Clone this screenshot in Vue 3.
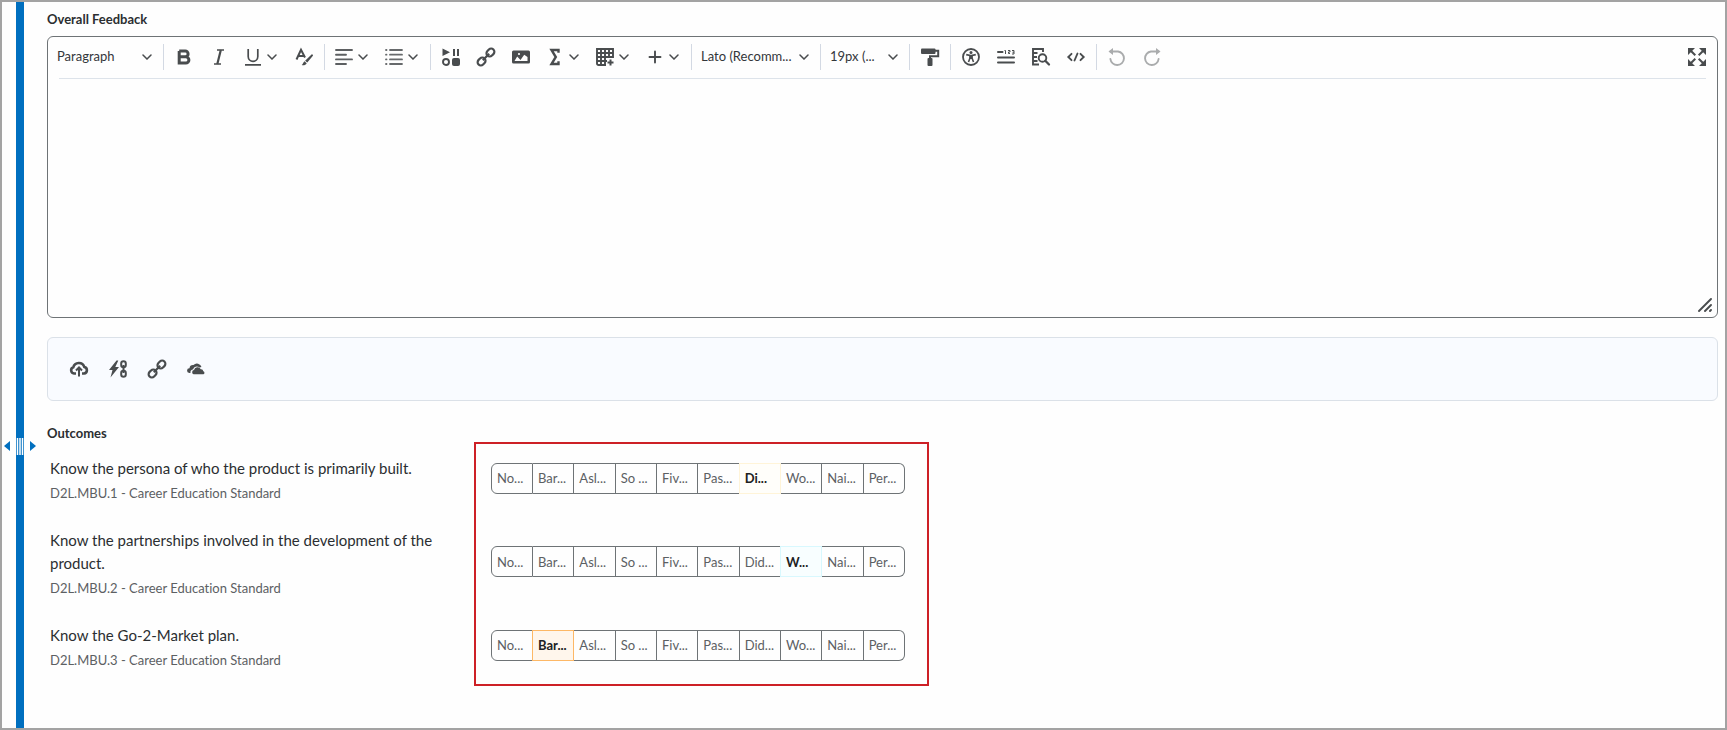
<script setup>
import { ref } from 'vue'

const feedback = ref('')
const levels = ['No...', 'Bar...', 'Asl...', 'So ...', 'Fiv...', 'Pas...', 'Did...', 'Wo...', 'Nai...', 'Per...']
const outcomes = ref([
  { id: 1, title: 'Know the persona of who the product is primarily built.', code: 'D2L.MBU.1 - Career Education Standard', selected: 6, tone: 'yellow', short: 'Di...' },
  { id: 2, title: 'Know the partnerships involved in the development of the product.', code: 'D2L.MBU.2 - Career Education Standard', selected: 7, tone: 'cyan', short: 'W...' },
  { id: 3, title: 'Know the Go-2-Market plan.', code: 'D2L.MBU.3 - Career Education Standard', selected: 1, tone: 'orange', short: 'Bar...' }
])
</script>

<template>
  <div class="page">
    <div class="splitter">
      <div class="bar"></div>
      <div class="handle">
        <button type="button" aria-label="Collapse left panel"><svg width="6" height="10" viewBox="0 0 6 10"><path d="M6 0v10L0 5z" fill="#006fbf" /></svg></button>
        <svg width="8" height="17" viewBox="0 0 8 17"><path d="M1.500 0v17M4 0v17M6.500 0v17" stroke="#fff" stroke-width="1.500" /></svg>
        <button type="button" aria-label="Collapse right panel"><svg width="6" height="10" viewBox="0 0 6 10"><path d="M0 0v10l6-5z" fill="#006fbf" /></svg></button>
      </div>
    </div>

    <main class="content">
      <h2 id="feedback-label">Overall Feedback</h2>

      <section class="editor">
        <div class="toolbar" role="toolbar" aria-label="Formatting">
          <span class="pick format">
            <select aria-label="Format"><option>Paragraph</option></select>
            <svg class="chev" viewBox="0 0 10 6"><path d="M1 1l4 4 4-4" /></svg>
          </span>
          <i class="sep"></i>
          <button type="button" aria-label="Bold"><svg class="ic" viewBox="0 0 18 18"><path d="M4.200 3h6a2.900 2.900 0 0 1 0 5.800H4.200M4.200 8.800h6.600a3.100 3.100 0 0 1 0 6.200H4.200V3" fill="none" stroke="#494c4e" stroke-width="3" /></svg></button>
          <button type="button" aria-label="Italic"><svg class="ic" viewBox="0 0 18 18"><path d="M7 2h7M4 16h7" fill="none" stroke="#494c4e" stroke-width="1.300" /><path d="M10.800 2L7.300 16" fill="none" stroke="#494c4e" stroke-width="2.200" /></svg></button>
          <button type="button" class="split" aria-label="Underline"><svg class="ic" viewBox="0 0 18 18"><path d="M4.200 1v7.500a4.800 4.800 0 0 0 9.600 0V1M1 16.800h16" fill="none" stroke="#494c4e" stroke-width="1.700" /></svg><svg class="chev" viewBox="0 0 10 6"><path d="M1 1l4 4 4-4" /></svg></button>
          <button type="button" aria-label="Text color"><svg class="ic" viewBox="0 0 18 18"><path d="M1.500 11.500L6 1.800 10 9.500M3.500 8h5.500" fill="none" stroke="#494c4e" stroke-width="2" /><path d="M16.800 6.200c1.100 0 1.600 1.100.9 1.800l-5.400 6.600-2.200-1.900zM9.500 13.300l2.200 1.900c-1 1.900-3 2.300-5 1.800 1.400-.7 1.300-2.500 2.800-3.700z" fill="#494c4e" /></svg></button>
          <i class="sep"></i>
          <button type="button" class="split" aria-label="Alignment"><svg class="ic" viewBox="0 0 18 18"><path d="M1 2h16M1 6.700h10M1 11.400h16M1 16h10" fill="none" stroke="#5c5f61" stroke-width="1.900" stroke-linecap="round" /></svg><svg class="chev" viewBox="0 0 10 6"><path d="M1 1l4 4 4-4" /></svg></button>
          <button type="button" class="split" aria-label="List"><svg class="ic" viewBox="0 0 18 18"><path d="M5 2h12M5 6.700h12M5 11.400h12M5 16h12M1 2h.5M1 6.700h.5M1 11.400h.5M1 16h.5" fill="none" stroke="#66696b" stroke-width="1.800" stroke-linecap="round" /></svg><svg class="chev" viewBox="0 0 10 6"><path d="M1 1l4 4 4-4" /></svg></button>
          <i class="sep"></i>
          <button type="button" aria-label="Insert stuff"><svg class="ic" viewBox="0 0 18 18"><path d="M.5.500L8 4.300.5 8zM11 1h2v7h-2zM15 1h2v7h-2z" fill="#494c4e" /><rect x="10" y="10" width="8" height="8" rx="2" fill="#494c4e" /><circle cx="4" cy="14" r="3" fill="none" stroke="#494c4e" stroke-width="1.900" /></svg></button>
          <button type="button" aria-label="Insert link"><svg class="ic" viewBox="0 0 18 18"><g fill="none" stroke="#494c4e" stroke-width="2.200" transform="rotate(-45 9 9)"><rect x="-1.500" y="5.800" width="8.500" height="6.400" rx="3.200" /><rect x="11" y="5.800" width="8.500" height="6.400" rx="3.200" /><path d="M4.500 9h9" /></g></svg></button>
          <button type="button" aria-label="Insert image"><svg class="ic" viewBox="0 0 18 18"><path d="M1.500 2.500h15A1.500 1.500 0 0 1 18 4v10a1.500 1.500 0 0 1-1.500 1.500h-15A1.500 1.500 0 0 1 0 14V4a1.500 1.500 0 0 1 1.500-1.500z" fill="#494c4e" /><path d="M2.500 13l2.700-4.500L8.500 12l3.700-5.200L15.500 9v4z" fill="#fff" /><circle cx="7" cy="6" r="1.100" fill="#fff" /></svg></button>
          <button type="button" class="split" aria-label="Equation"><svg class="ic" viewBox="0 0 18 18"><path d="M12.500 4.800V2H5.500l4.300 7-4.300 7h7v-2.800" fill="none" stroke="#494c4e" stroke-width="2.400" /></svg><svg class="chev" viewBox="0 0 10 6"><path d="M1 1l4 4 4-4" /></svg></button>
          <button type="button" class="split" aria-label="Table"><svg class="ic" viewBox="0 0 18 18"><path d="M10 17H2.500A1.500 1.500 0 0 1 1 15.500V1h16v9M1 5h16M1 9h16M1 13h10M5 1v16M9 1v16M13 1v9" fill="none" stroke="#494c4e" stroke-width="1.900" /><path d="M14.500 11.500v6M11.500 14.500h6" stroke="#494c4e" stroke-width="2" /></svg><svg class="chev" viewBox="0 0 10 6"><path d="M1 1l4 4 4-4" /></svg></button>
          <button type="button" class="split" aria-label="Insert more"><svg class="ic" viewBox="0 0 18 18"><path d="M9 3.500v11M3.500 9h11" stroke="#494c4e" stroke-width="1.900" stroke-linecap="round" /></svg><svg class="chev" viewBox="0 0 10 6"><path d="M1 1l4 4 4-4" /></svg></button>
          <i class="sep"></i>
          <span class="pick family">
            <select aria-label="Font family"><option>Lato (Recomm...</option></select>
            <svg class="chev" viewBox="0 0 10 6"><path d="M1 1l4 4 4-4" /></svg>
          </span>
          <i class="sep"></i>
          <span class="pick size">
            <select aria-label="Font size"><option>19px (...</option></select>
            <svg class="chev" viewBox="0 0 10 6"><path d="M1 1l4 4 4-4" /></svg>
          </span>
          <i class="sep"></i>
          <button type="button" aria-label="Format painter"><svg class="ic" viewBox="0 0 18 18"><rect x="0" y=".5" width="14.500" height="5.500" rx="1" fill="#494c4e" /><path d="M14 2.800h3.200v5.400H9V11" fill="none" stroke="#494c4e" stroke-width="2" /><rect x="6.500" y="10" width="5" height="8" rx="1" fill="#494c4e" /></svg></button>
          <i class="sep"></i>
          <button type="button" aria-label="Accessibility checker"><svg class="ic" viewBox="0 0 18 18"><circle cx="9" cy="9" r="8" fill="none" stroke="#494c4e" stroke-width="1.800" /><circle cx="9" cy="4.600" r="1.500" fill="#494c4e" /><path d="M4.200 6.600L8 7.500v2.400L6.500 14M13.800 6.600L10 7.500v2.400l1.500 4.100" fill="none" stroke="#494c4e" stroke-width="1.600" /><path d="M7.500 7h3v4h-3z" fill="#494c4e" /></svg></button>
          <button type="button" aria-label="Word count"><svg class="ic" viewBox="0 0 18 18"><path d="M1 4h4.500M1 9.500h16M1 14.500h16" stroke="#494c4e" stroke-width="2" stroke-linecap="round" /><path d="M7.500 2.500h1v3.500M11 2.500h2v1.500h-1.500v1.500H13M15 2.500h2V6h-2M15.500 4.200H17" fill="none" stroke="#494c4e" stroke-width="1" /></svg></button>
          <button type="button" aria-label="Preview"><svg class="ic" viewBox="0 0 18 18"><path d="M11 4V1H1v15.500h6M1 5h4.500M1 9h4M1 13h4.500" fill="none" stroke="#494c4e" stroke-width="1.900" /><circle cx="10.500" cy="10" r="3.800" fill="none" stroke="#494c4e" stroke-width="1.900" /><path d="M13.300 12.800L17 16.500" stroke="#494c4e" stroke-width="2.300" stroke-linecap="round" /></svg></button>
          <button type="button" aria-label="Source code"><svg class="ic" viewBox="0 0 18 18"><path d="M4.500 5.800L1.300 9l3.200 3.200M13.500 5.800L16.700 9l-3.200 3.200M10.500 5.500l-3 7" fill="none" stroke="#494c4e" stroke-width="1.900" stroke-linecap="round" /></svg></button>
          <i class="sep"></i>
          <button type="button" disabled aria-label="Undo"><svg class="ic" viewBox="0 0 18 18"><path d="M2.500 3.500h7.500a6.800 6.800 0 1 1-7.600 7.500" fill="none" stroke="#aaacad" stroke-width="1.900" stroke-linecap="round" /><path d="M5 0v7L.5 3.500z" fill="#aaacad" /></svg></button>
          <button type="button" disabled aria-label="Redo"><svg class="ic" viewBox="0 0 18 18"><path d="M15.500 3.500H8a6.800 6.800 0 1 0 7.600 7.500" fill="none" stroke="#aaacad" stroke-width="1.900" stroke-linecap="round" /><path d="M13 0v7l4.500-3.500z" fill="#aaacad" /></svg></button>
          <button type="button" class="full" aria-label="Fullscreen"><svg class="ic" viewBox="0 0 18 18"><path d="M0 0h7L0 7zM18 0v7l-7-7zM0 18v-7l7 7zM18 18h-7l7-7z" fill="#494c4e" /><path d="M2 2l5.300 5.300M16 2l-5.300 5.300M2 16l5.300-5.300M16 16l-5.300-5.300" stroke="#494c4e" stroke-width="2" /></svg></button>
        </div>
        <div class="rule"></div>
        <textarea v-model="feedback" aria-labelledby="feedback-label"></textarea>
        <svg class="grip" viewBox="0 0 14 14"><path d="M1 13L13 1M7 13l6-6M12 13l1-1" stroke="#494c4e" stroke-width="1.900" stroke-linecap="round" /></svg>
      </section>

      <section class="attach" aria-label="Attachments">
        <button type="button" aria-label="Upload file"><svg class="ic" viewBox="0 0 18 18"><path d="M6 13.500H4A3.200 3.200 0 0 1 3.300 7.300 5.700 5.700 0 0 1 14.300 7a3.300 3.300 0 0 1-.3 6.500h-2" fill="none" stroke="#494c4e" stroke-width="2.600" /><path d="M9 16.500V8M6 10.500l3-3 3 3" fill="none" stroke="#494c4e" stroke-width="2" /></svg></button>
        <button type="button" aria-label="Attach quicklink"><svg class="ic" viewBox="0 0 18 18"><path d="M7.500.5L0 10h3.500L1.500 17.500 10 7H6.300l3-6.500z" fill="#494c4e" /><g fill="none" stroke="#494c4e" stroke-width="2"><rect x="12.200" y="1.200" width="4.600" height="6" rx="2.300" /><rect x="12.200" y="10.800" width="4.600" height="6" rx="2.300" /><path d="M14.500 5v8" /></g></svg></button>
        <button type="button" aria-label="Attach web link"><svg class="ic" viewBox="0 0 18 18"><g fill="none" stroke="#494c4e" stroke-width="2.200" transform="rotate(-45 9 9)"><rect x="-1.500" y="5.800" width="8.500" height="6.400" rx="3.200" /><rect x="11" y="5.800" width="8.500" height="6.400" rx="3.200" /><path d="M4.500 9h9" /></g></svg></button>
        <button type="button" aria-label="Attach from OneDrive"><svg class="ic" viewBox="0 0 18 18"><path d="M3.500 13H2.300A2.300 2.300 0 0 1 2.500 8.300 3.700 3.700 0 0 1 6.500 5 4.700 4.700 0 0 1 14.500 7L12.500 7.500C10 5.500 6.700 7 6.300 9.200 4.300 9.500 3 11 3.500 13z" fill="#494c4e" /><path d="M6.500 14.200a2.200 2.200 0 0 1 .5-4.200 3.700 3.700 0 0 1 6.800-.8 2.300 2.300 0 0 1 2.500 2 1.600 1.600 0 0 1 .2 3z" fill="#494c4e" /></svg></button>
      </section>

      <h2>Outcomes</h2>
      <div class="outcomes">
        <div v-for="o in outcomes" :key="o.id" class="row">
          <div class="outcome">
            <p :id="'outcome-' + o.id" class="title">{{ o.title }}</p>
            <p class="code">{{ o.code }}</p>
          </div>
          <div class="scale" role="radiogroup" :aria-labelledby="'outcome-' + o.id">
            <label v-for="(level, i) in levels" :key="level" :class="i === o.selected ? ['on', o.tone] : null">
              <input v-model="o.selected" type="radio" :name="'level-' + o.id" :value="i" />
              <span>{{ i === o.selected ? o.short : level }}</span>
            </label>
          </div>
        </div>
        <div class="callout"></div>
      </div>
    </main>
  </div>
</template>

<style>
body {
  background: #fefefe;
}
</style>

<style scoped>
.page {
  display: flex;
  box-sizing: border-box;
  min-height: 100vh;
  border: 2px solid #a3a3a3;
  background: #fefefe;
  color: #2b2e31;
  font-family: Lato, "Liberation Sans", sans-serif;
  font-size: 13px;
  font-variant-ligatures: none;
}
.splitter {
  position: relative;
  flex: none;
  width: 45px;
}
.bar {
  width: 8px;
  height: 100%;
  margin-left: 14px;
  background: #006fbf;
}
.handle {
  position: absolute;
  top: 60%;
  left: 2px;
  display: flex;
  align-items: center;
  gap: 6px;
}
button {
  display: flex;
  align-items: center;
  justify-content: center;
  padding: 0;
  border: 0;
  background: none;
  color: inherit;
  font: inherit;
}
svg {
  display: block;
  flex: none;
}
.ic {
  width: 18px;
  height: 18px;
  overflow: visible;
}
.content {
  flex: 1;
  min-width: 0;
  padding: 8px 7px 0 0;
}
h2 {
  margin: 0;
  font-size: 13px;
  line-height: 18px;
  font-weight: 700;
}
.editor {
  position: relative;
  margin-top: 8px;
  border: 1px solid #6e7376;
  border-radius: 6px;
}
.toolbar {
  display: flex;
  align-items: center;
  height: 40px;
  padding: 0 3px 1px 2px;
}
.toolbar button {
  width: 35px;
  height: 30px;
}
.toolbar .split {
  width: 50px;
  justify-content: flex-start;
  padding-left: 8px;
  gap: 5px;
}
.toolbar .full {
  margin-left: auto;
}
.chev {
  width: 10px;
  height: 6px;
  fill: none;
  stroke: #494c4e;
  stroke-width: 1.5;
  stroke-linecap: round;
}
.sep {
  flex: none;
  width: 1px;
  height: 26px;
  margin: 0 2px 0 3px;
  background: #d3d9e3;
}
.pick {
  display: grid;
  align-items: center;
  height: 30px;
}
.pick > * {
  grid-area: 1 / 1;
}
.pick .chev {
  justify-self: end;
  margin-right: 8px;
  pointer-events: none;
}
.pick select {
  width: 100%;
  height: 30px;
  margin: 0;
  padding: 0 0 3px 7px;
  border: 0;
  appearance: none;
  background: none;
  color: #33363a;
  font: inherit;
}
.format {
  width: 110px;
}
.family {
  width: 123px;
}
.size {
  width: 83px;
}
.rule {
  height: 1px;
  margin: 0 11px;
  background: #dde3ea;
}
textarea {
  display: block;
  box-sizing: border-box;
  width: 100%;
  height: 238px;
  padding: 12px;
  border: 0;
  outline: 0;
  resize: none;
  background: none;
  color: inherit;
  font: inherit;
}
.grip {
  position: absolute;
  right: 5px;
  bottom: 5px;
  width: 14px;
  height: 14px;
}
.attach {
  display: flex;
  align-items: center;
  gap: 21px;
  height: 62px;
  margin: 19px 0 23px;
  padding-left: 22px;
  border: 1px solid #dbe1e8;
  border-radius: 6px;
  background: #f9fbff;
}
.outcomes {
  position: relative;
}
.row {
  display: grid;
  grid-template-columns: 427px 455px;
  align-items: center;
}
.outcome {
  padding: 15px 24px 11px 3px;
}
.outcome p {
  margin: 0;
}
.title {
  font-size: 15px;
  line-height: 23px;
}
.outcome .code {
  margin-top: 3px;
  color: #5c6063;
  font-size: 13px;
  line-height: 20px;
}
.scale {
  display: grid;
  grid-template-columns: 42px repeat(9, 1fr);
  margin: 0 24px 0 17px;
}
.scale label {
  display: flex;
  align-items: center;
  box-sizing: border-box;
  height: 31px;
  padding-left: 5px;
  border: 1px solid #6e7376;
  border-left-width: 0;
  color: #5c6063;
  white-space: nowrap;
}
.scale label:first-child {
  border-left-width: 1px;
  border-radius: 6px 0 0 6px;
}
.scale label:last-child {
  border-radius: 0 6px 6px 0;
}
.scale input {
  width: 0;
  height: 0;
  margin: 0;
  appearance: none;
}
.scale .on {
  margin-left: -1px;
  border-left-width: 1px;
  color: #202122;
  font-weight: 700;
}
.scale .yellow {
  border-color: #fff4d8;
  background: #fffefa;
}
.scale .cyan {
  border-color: #d8f8fe;
  background: #f8feff;
}
.scale .orange {
  border-color: #fdb866;
  background: #fff6ec;
}
.callout {
  position: absolute;
  box-sizing: border-box;
  top: 0;
  bottom: -5px;
  left: 427px;
  width: 455px;
  border: 2px solid #cd2026;
  pointer-events: none;
}
</style>
